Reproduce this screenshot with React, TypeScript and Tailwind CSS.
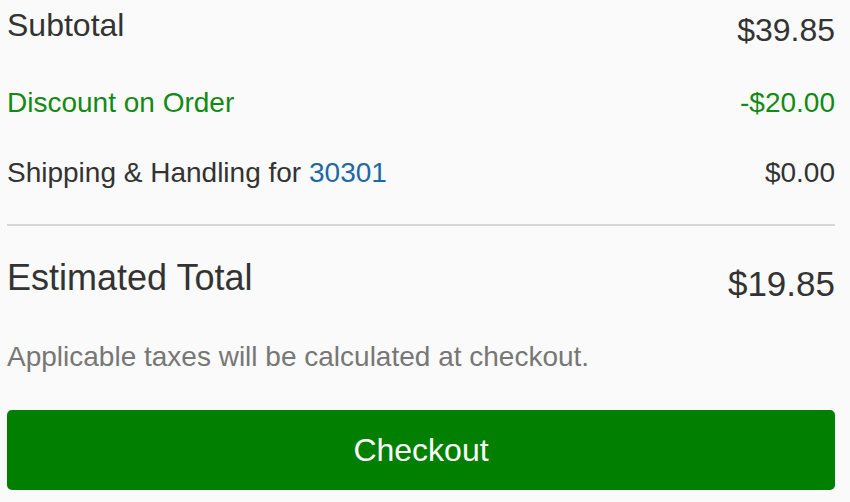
const rows = [
  { label: "Discount on Order", value: "-$20.00", green: true },
];

const App = () => {
  return (
    <div className="min-h-screen bg-[#fafafa] pl-[7px] pr-[15px] pt-[9px] font-['Liberation_Sans',Arial,sans-serif] text-[#333333]">
      {/* subtotal */}
      <div className="flex justify-between items-start">
        <span className="text-[32px] leading-none">Subtotal</span>
        <span className="text-[32px] leading-none mt-[5px]">$39.85</span>
      </div>

      {rows.map((r) => (
        <div key={r.label} className="flex justify-between items-start mt-[43px] text-[#138a13]">
          <span className="text-[28px] leading-none">{r.label}</span>
          <span className="text-[28px] leading-none">{r.value}</span>
        </div>
      ))}

      <div className="flex justify-between items-start mt-[42px]">
        <span className="text-[28px] leading-none">
          Shipping &amp; Handling for <span className="text-[#1d69a6]">30301</span>
        </span>
        <span className="text-[28px] leading-none">$0.00</span>
      </div>

      <div className="mt-[37px] h-[2px] bg-[#d7d7d7]" />

      {/* total */}
      <div className="flex justify-between items-start mt-[34px]">
        <span className="text-[36px] leading-none">Estimated Total</span>
        <span className="text-[35px] leading-none mt-[6px]">$19.85</span>
      </div>

      <p className="mt-[42px] text-[28px] leading-none text-[#777777]">
        Applicable taxes will be calculated at checkout.
      </p>

      <button className="mt-[39px] flex h-[80px] w-full items-center justify-center rounded-[5px] bg-[#007f00] text-[32px] leading-none text-white">
        Checkout
      </button>
    </div>
  );
};

export default App;
